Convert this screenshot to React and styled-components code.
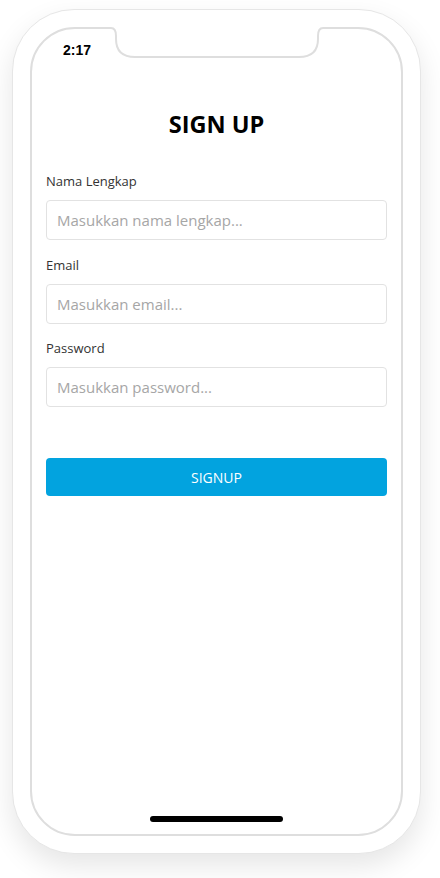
import React from "react";
import styled, { createGlobalStyle } from "styled-components";

const GlobalStyle = createGlobalStyle`
  html, body { margin: 0; padding: 0; background: #ffffff; }
  body { font-family: "Open Sans", "Noto Sans", sans-serif; }
  * { box-sizing: border-box; }
`;

const Page = styled.div`
  padding: 9px 0 0 12px;
  width: 440px;
  height: 878px;
`;

const Phone = styled.div`
  width: 409px;
  height: 845px;
  padding: 17px;
  background: #ffffff;
  border: 1px solid #e6e6e6;
  border-radius: 62px;
  box-shadow: 0 12px 28px rgba(0, 0, 0, 0.1);
`;

const Screen = styled.div`
  position: relative;
  width: 373px;
  height: 809px;
  border: 2px solid #dedede;
  border-radius: 45px;
  background: #ffffff;
  display: flex;
  flex-direction: column;
`;

const Notch = styled.svg`
  position: absolute;
  top: -2px;
  left: 50%;
  transform: translateX(-50%);
  display: block;
`;

const StatusBar = styled.div`
  height: 42px;
  display: flex;
  align-items: center;
  padding: 0 0 0 31px;
`;

const Time = styled.span`
  font-family: "Liberation Sans", Arial, sans-serif;
  font-weight: 700;
  font-size: 14px;
  color: #000;
`;

const Content = styled.div`
  padding: 37px 14px 0;
  display: flex;
  flex-direction: column;
`;

const Title = styled.h1`
  margin: 0 0 32px;
  font-size: 23.5px;
  line-height: 32px;
  font-weight: 700;
  text-align: center;
  color: #000;
`;

const Field = styled.div`
  display: flex;
  flex-direction: column;
  margin-bottom: 15.6px;
`;

const Label = styled.label`
  font-size: 13px;
  line-height: 18px;
  color: #333;
  margin-bottom: 10px;
`;

const Input = styled.input`
  height: 40px;
  width: 100%;
  border: 1px solid #e2e2e2;
  border-radius: 4px;
  padding: 0 10px;
  font-family: "Open Sans", sans-serif;
  font-size: 15px;
  color: #333;
  outline: none;
  &::placeholder { color: #a6a6a6; }
`;

const Button = styled.button`
  margin-top: 35.5px;
  height: 38px;
  width: 100%;
  border: none;
  border-radius: 4px;
  background: #02a3df;
  color: #fff;
  font-family: "Open Sans", sans-serif;
  font-size: 14px;
  cursor: pointer;
`;

const HomeBar = styled.div`
  margin: auto auto 12px;
  width: 133px;
  height: 6px;
  border-radius: 3px;
  background: #000;
`;

const fields = [
  { label: "Nama Lengkap", placeholder: "Masukkan nama lengkap...", type: "text" },
  { label: "Email", placeholder: "Masukkan email...", type: "email" },
  { label: "Password", placeholder: "Masukkan password...", type: "password" },
];

export default function App() {
  return (
    <Page>
      <GlobalStyle />
      <Phone>
        <Screen>
          <Notch width="216" height="33" viewBox="0 0 216 33">
            <path d="M0 0 H216 V1 H214 Q209 1 209 9 V12 Q209 30 190 30 H26 Q7 30 7 12 V9 Q7 1 2 1 H0 Z" fill="#fff" />
            <path d="M0 1 H2 Q7 1 7 9 V12 Q7 30 26 30 H190 Q209 30 209 12 V9 Q209 1 214 1 H216" fill="none" stroke="#dedede" strokeWidth="2" />
          </Notch>
          <StatusBar>
            <Time>2:17</Time>
          </StatusBar>
          <Content>
            <Title>SIGN UP</Title>
            {fields.map((f) => (
              <Field key={f.label}>
                <Label>{f.label}</Label>
                <Input type={f.type} placeholder={f.placeholder} />
              </Field>
            ))}
            <Button>SIGNUP</Button>
          </Content>
          <HomeBar />
        </Screen>
      </Phone>
    </Page>
  );
}
